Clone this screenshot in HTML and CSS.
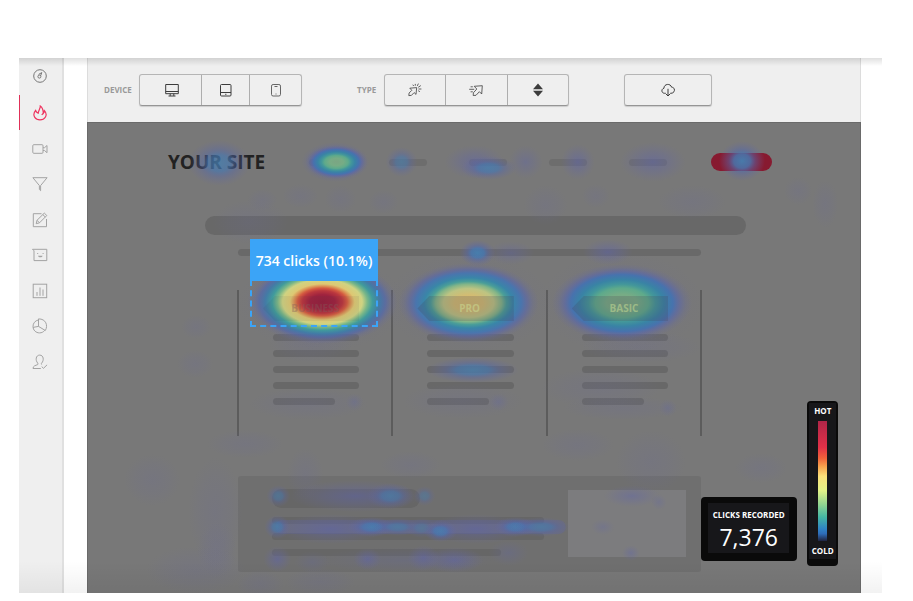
FILE: index.html
```html
<!DOCTYPE html>
<html lang="en">
<head>
<meta charset="utf-8">
<title>Click heatmap</title>
<link rel="stylesheet" href="styles.css">
</head>
<body>
<div class="app">
  <nav class="sidebar" aria-label="Main">
    <ul class="side-list">
      <li><a class="side-link dark" href="#" aria-label="Dashboard"><svg viewBox="0 0 16 16"><circle cx="8" cy="8" r="6.3"/><circle cx="7.4" cy="8.6" r="1.5"/><path d="M8.6 7.800 9.800 4.600 6.600 6.400"/></svg></a></li>
      <li class="active"><a class="side-link" href="#" aria-label="Heatmaps"><svg class="bold" viewBox="0 0 16 16"><path d="M3.600 5.500C1.500 8 1.400 10.300 2.800 12.400c1.200 1.800 3.200 2.500 5.200 2.500s4.200-.8 5.300-2.600c1.300-2.200.9-4.800-.9-6.700-.1 1.200-.4 2-1.100 2.700C11.200 5.200 10.400 2.600 8.300 1.100 8.400 3.600 6.600 5 6.200 8.200 5 7.600 4 6.900 3.600 5.500Z"/><path d="M11.300 8.300 9.700 9.900"/></svg></a></li>
      <li><a class="side-link" href="#" aria-label="Recordings"><svg viewBox="0 0 16 16"><rect x=".8" y="3.700" width="10.200" height="8.600" rx="1"/><path d="M11 6.700h1.500L15 4.500v7.200l-2.500-2.200H11"/></svg></a></li>
      <li><a class="side-link" href="#" aria-label="Funnels"><svg viewBox="0 0 16 16"><path d="M.9 1.700h14.200L8.600 9.600v5.100L7.400 13.500V9.600Z"/></svg></a></li>
      <li><a class="side-link" href="#" aria-label="Forms"><svg viewBox="0 0 16 16"><path d="M9.500 1.700H1.300v13h13.200V7"/><path d="m4.200 11.700.8-3.400 7.300-7.200 2.500 2.400-7.300 7.300ZM5 8.300l2.500 2.500M10.800 2.600l2.500 2.400"/></svg></a></li>
      <li><a class="side-link" href="#" aria-label="Feedback"><svg viewBox="0 0 16 16"><path d="M.5 2.300h14.300v11.300H2V3.800Z"/><path d="M5.200 6.500h1M10.600 6.500h1"/><path class="fill" d="M6 8.800h4.600c-.5 2-4 2-4.600 0Z"/></svg></a></li>
      <li><a class="side-link" href="#" aria-label="Surveys"><svg viewBox="0 0 16 16"><rect x="1.200" y="1.200" width="13.500" height="13.500"/><path d="M5 12.800V9M8 12.800V4.500M11 12.800V6.500"/></svg></a></li>
      <li><a class="side-link" href="#" aria-label="Reports"><svg viewBox="0 0 16 16"><path d="M6.500 1.900C3 2.700 1 5.300 1 8.400c0 3.700 2.900 6.500 6.500 6.500 2.200 0 4-.9 5.200-2.600"/><path d="M6.500.9v7.500l6.800 4.100c3-4.900.6-11.800-6.800-11.600ZM1 9.400l5.500-1"/></svg></a></li>
      <li><a class="side-link" href="#" aria-label="Recruiters"><svg viewBox="0 0 16 16"><path d="M8.800 14.500H1c0-2.700 2.500-3 4.700-3.900.5-.2.400-1 0-1.500C3.200 6.300 3.700 1.100 7.700 1.100s4.500 5.200 2 8c-.5.500-.4 1.200.2 1.500M9.700 12.600l1.800 1.700 3.600-3.500"/></svg></a></li>
    </ul>
  </nav>

  <main class="main">
    <div class="toolbar">
      <div class="tool" role="group" aria-labelledby="device-label">
        <span class="tool-label" id="device-label">DEVICE</span>
        <div class="segments device">
          <button type="button" aria-label="Desktop"><svg viewBox="0 0 14 14"><path d="M.7 1.500h12.600v9.200H.7ZM.7 8.500h12.600M5.200 10.700v2.200M8.800 10.700v2.200M3.500 13h7"/></svg></button>
          <button type="button" aria-label="Tablet"><svg viewBox="0 0 14 14"><rect x="1.500" y="1.500" width="10.500" height="11.500" rx="1"/><path d="M1.500 9.500h10.500M6.200 11.300h1.200"/></svg></button>
          <button type="button" aria-label="Phone"><svg class="soft" viewBox="0 0 14 14"><rect x="2.500" y="1.500" width="9" height="11.500" rx="1.600"/><path d="M5.500 3.500h3M6.500 11h1"/></svg></button>
        </div>
      </div>
      <div class="tool" role="group" aria-labelledby="type-label">
        <span class="tool-label short" id="type-label">TYPE</span>
        <div class="segments type">
          <button type="button" aria-label="Clicks"><svg class="thin" viewBox="0 0 14 14"><path d="M1.800 5.200 8.700 4.600 8 11.400 6.100 9.600 3.400 12.400.8 12.600 1.100 10 3.800 7.300Z"/><path d="M7.300 2.700V.9M9.300 2.900 10.400.6M10.200 4.300l2.600-1.700M10.500 6h2.900M10.200 7.700l1.700 1M5.700 3 4.800 1.700"/></svg></button>
          <button type="button" aria-label="Moves"><svg class="thin" viewBox="0 0 14 14"><path d="M5.200 3.300 13.300 2.700 12.700 11 10.400 8.700 7 12.300 4.200 12.500 4.400 9.800 7.800 6Z"/><path d="M1.600 3.800h2.200M.2 6.300h5M1.600 8.800h2.200"/></svg></button>
          <button type="button" aria-label="Scroll"><svg viewBox="0 0 14 14"><path class="fill" d="m7 .6 5 5.600H2ZM7 13.400l5-5.600H2Z"/></svg></button>
        </div>
      </div>
      <div class="tool">
        <div class="segments download">
          <button type="button" aria-label="Download"><svg viewBox="0 0 14 14"><path d="M4.800 10.300H3.600C.4 10.300-.1 6 2.900 5.300 3 .6 9.500.1 10.600 4.200c4.100.2 3.700 6-.6 6.100h-.8M7 5.800v7M5 11l2 2 2-2"/></svg></button>
        </div>
      </div>
    </div>

    <section class="canvas" aria-label="Heatmap">
      <header class="site-header">
        <strong class="logo">YOUR SITE</strong>
        <div class="site-nav"><i></i><i></i><i></i><i></i><i></i></div>
        <span class="cta"></span>
      </header>
      <div class="hero-bar"></div>
      <div class="sub-bar"></div>
      <div class="plans">
        <div class="plan"><div class="tag business"><span>BUSINESS</span></div><i></i><i></i><i></i><i></i><i></i></div>
        <div class="plan"><div class="tag"><span>PRO</span></div><i></i><i></i><i></i><i></i><i></i></div>
        <div class="plan"><div class="tag"><span>BASIC</span></div><i></i><i></i><i></i><i></i><i></i></div>
      </div>
      <div class="panel">
        <div class="copy"><i class="title"></i><i></i><i></i><i class="short"></i></div>
        <div class="thumb"></div>
      </div>

      <svg class="heat" viewBox="87 122 773 471" preserveAspectRatio="none" aria-hidden="true">
        <defs>
          <radialGradient id="hot">
            <stop offset="0" stop-color="#941f3c"/><stop offset=".17" stop-color="#9e223e"/><stop offset=".27" stop-color="#bb373e"/><stop offset=".33" stop-color="#d45b40"/><stop offset=".37" stop-color="#da8a51"/><stop offset=".43" stop-color="#dec873"/><stop offset=".53" stop-color="#cfd382"/><stop offset=".6" stop-color="#79b788"/><stop offset=".67" stop-color="#409b9c"/><stop offset=".76" stop-color="#407ba8" stop-opacity=".95"/><stop offset=".84" stop-color="#5068ae" stop-opacity=".7"/><stop offset=".92" stop-color="#6068a4" stop-opacity=".25"/><stop offset="1" stop-color="#6868a0" stop-opacity="0"/>
          </radialGradient>
          <radialGradient id="warm">
            <stop offset="0" stop-color="#d4bb70"/><stop offset=".2" stop-color="#d3bc72"/><stop offset=".36" stop-color="#bdc482"/><stop offset=".47" stop-color="#82b588"/><stop offset=".54" stop-color="#4a9e98"/><stop offset=".63" stop-color="#3986a8"/><stop offset=".75" stop-color="#4775b0" stop-opacity=".95"/><stop offset=".84" stop-color="#5967ab" stop-opacity=".6"/><stop offset=".92" stop-color="#6068a4" stop-opacity=".22"/><stop offset="1" stop-color="#6868a0" stop-opacity="0"/>
          </radialGradient>
          <radialGradient id="mild">
            <stop offset="0" stop-color="#7ba583"/><stop offset=".22" stop-color="#77ac85"/><stop offset=".38" stop-color="#5eaa8b"/><stop offset=".48" stop-color="#43979a"/><stop offset=".6" stop-color="#3983a5"/><stop offset=".73" stop-color="#4572b0" stop-opacity=".95"/><stop offset=".82" stop-color="#5967ab" stop-opacity=".6"/><stop offset=".91" stop-color="#6068a4" stop-opacity=".22"/><stop offset="1" stop-color="#6868a0" stop-opacity="0"/>
          </radialGradient>
          <radialGradient id="cool">
            <stop offset="0" stop-color="#457fb0" stop-opacity=".95"/><stop offset=".36" stop-color="#4777b0" stop-opacity=".85"/><stop offset=".58" stop-color="#5568aa" stop-opacity=".5"/><stop offset="1" stop-color="#6868a0" stop-opacity="0"/>
          </radialGradient>
          <radialGradient id="cold">
            <stop offset="0" stop-color="#5d63ad" stop-opacity=".5"/><stop offset=".5" stop-color="#6266a6" stop-opacity=".28"/><stop offset="1" stop-color="#6a6aa0" stop-opacity="0"/>
          </radialGradient>
          <radialGradient id="trace">
            <stop offset="0" stop-color="#6a6a99" stop-opacity=".2"/><stop offset=".6" stop-color="#6a6a99" stop-opacity=".1"/><stop offset="1" stop-color="#6a6a99" stop-opacity="0"/>
          </radialGradient>
        </defs>
        <g fill="url(#trace)">
          <ellipse cx="250" cy="222" rx="38" ry="22"/><ellipse cx="340" cy="199" rx="16" ry="14"/><ellipse cx="300" cy="196" rx="18" ry="12"/><ellipse cx="262" cy="200" rx="15" ry="11"/><ellipse cx="383" cy="202" rx="15" ry="12"/><ellipse cx="545" cy="205" rx="22" ry="20"/><ellipse cx="595" cy="196" rx="14" ry="12"/><ellipse cx="691" cy="202" rx="34" ry="17"/><ellipse cx="797" cy="191" rx="14" ry="14"/><ellipse cx="824" cy="204" rx="13" ry="24"/><ellipse cx="196" cy="327" rx="15" ry="12"/><ellipse cx="195" cy="364" rx="18" ry="14"/><ellipse cx="245" cy="444" rx="38" ry="14"/><ellipse cx="215" cy="512" rx="27" ry="55"/><ellipse cx="217" cy="550" rx="20" ry="28"/><ellipse cx="152" cy="480" rx="28" ry="26"/><ellipse cx="196" cy="570" rx="50" ry="24"/><ellipse cx="260" cy="584" rx="24" ry="14"/><ellipse cx="320" cy="582" rx="35" ry="14"/><ellipse cx="650" cy="462" rx="35" ry="32"/><ellipse cx="577" cy="445" rx="36" ry="16"/><ellipse cx="760" cy="468" rx="26" ry="15"/><ellipse cx="600" cy="388" rx="60" ry="20"/><ellipse cx="622" cy="408" rx="60" ry="12"/><ellipse cx="640" cy="347" rx="60" ry="16"/><ellipse cx="310" cy="343" rx="42" ry="20"/><ellipse cx="308" cy="404" rx="60" ry="16"/><ellipse cx="462" cy="401" rx="60" ry="18"/><ellipse cx="305" cy="474" rx="18" ry="26"/><ellipse cx="410" cy="465" rx="30" ry="14"/>
        </g>
        <ellipse cx="219" cy="163" rx="31" ry="23" fill="url(#cool)" opacity=".8"/>
        <ellipse cx="335" cy="162" rx="34" ry="20" fill="url(#cool)"/>
        <ellipse cx="336" cy="162" rx="31" ry="17" fill="url(#mild)"/>
        <ellipse cx="401" cy="162" rx="16" ry="15" fill="url(#cool)" opacity=".65"/>
        <ellipse cx="474" cy="162" rx="30" ry="17" fill="url(#cold)"/>
        <ellipse cx="488" cy="168" rx="28" ry="12" fill="url(#cool)" opacity=".8"/>
        <g fill="url(#cold)"><ellipse cx="525" cy="162" rx="17" ry="17" opacity=".7"/><ellipse cx="577" cy="162" rx="17" ry="18"/><ellipse cx="652" cy="162" rx="33" ry="20"/></g>
        <ellipse cx="741" cy="161" rx="23" ry="20" fill="url(#cool)"/>
        <ellipse cx="477" cy="253" rx="18" ry="13" fill="url(#cool)"/>
        <g fill="url(#cold)"><ellipse cx="510" cy="253" rx="24" ry="12" opacity=".7"/><ellipse cx="607" cy="252" rx="25" ry="13"/></g>
        <g fill="url(#trace)"><ellipse cx="322" cy="304" rx="86" ry="47"/><ellipse cx="468" cy="303" rx="84" ry="50"/><ellipse cx="621" cy="303" rx="82" ry="51"/></g>
        <ellipse cx="322" cy="302" rx="75" ry="42" fill="url(#hot)"/>
        <ellipse cx="468" cy="303" rx="70" ry="40" fill="url(#warm)"/>
        <ellipse cx="621" cy="303" rx="70" ry="39" fill="url(#mild)"/>
        <ellipse cx="472" cy="370" rx="46" ry="13" fill="url(#cool)" opacity=".8"/>
        <ellipse cx="355" cy="496" rx="66" ry="16" fill="url(#cold)"/>
        <ellipse cx="390" cy="496" rx="24" ry="13" fill="url(#cool)" opacity=".7"/>
        <ellipse cx="278" cy="496" rx="12" ry="11" fill="url(#cool)" opacity=".6"/>
        <ellipse cx="424" cy="496" rx="11" ry="10" fill="url(#cool)" opacity=".5"/>
        <rect x="275" y="520" width="290" height="14" rx="7" fill="#5e65a6" opacity=".28"/>
        <g fill="url(#cool)"><ellipse cx="277" cy="527" rx="13" ry="12" opacity=".8"/><ellipse cx="371" cy="527" rx="24" ry="10"/><ellipse cx="397" cy="527" rx="24" ry="9" opacity=".7"/><ellipse cx="421" cy="528" rx="16" ry="10" opacity=".5"/><ellipse cx="440" cy="531" rx="17" ry="11"/><ellipse cx="515" cy="527" rx="22" ry="10"/><ellipse cx="540" cy="527" rx="30" ry="10" opacity=".7"/></g>
        <g fill="url(#cold)"><ellipse cx="330" cy="529" rx="55" ry="15"/><ellipse cx="475" cy="529" rx="50" ry="15"/><ellipse cx="277" cy="559" rx="14" ry="13"/><ellipse cx="367" cy="559" rx="14" ry="11"/><ellipse cx="423" cy="558" rx="16" ry="13"/><ellipse cx="454" cy="560" rx="29" ry="13"/><ellipse cx="405" cy="560" rx="90" ry="13" opacity=".4"/><ellipse cx="508" cy="553" rx="20" ry="13" opacity=".5"/><ellipse cx="312" cy="562" rx="18" ry="11" opacity=".4"/><ellipse cx="631" cy="496" rx="28" ry="11" opacity=".8"/><ellipse cx="658" cy="502" rx="8" ry="8" opacity=".5"/><ellipse cx="602" cy="527" rx="12" ry="8" opacity=".5"/><ellipse cx="630" cy="553" rx="9" ry="8" opacity=".7"/><ellipse cx="354" cy="402" rx="9" ry="9" opacity=".5"/><ellipse cx="498" cy="402" rx="10" ry="9" opacity=".5"/><ellipse cx="667" cy="408" rx="9" ry="9" opacity=".5"/></g>
      </svg>

      <div class="hotspot"><div class="tip">734 clicks (10.1%)</div></div>
      <div class="counter"><div class="counter-in"><span class="counter-label">CLICKS RECORDED</span><span class="counter-value">7,376</span></div></div>
      <div class="legend"><div class="legend-in"><span>HOT</span><div class="scale"></div><span>COLD</span></div></div>
    </section>
  </main>
</div>
</body>
</html>
```
FILE: styles.css
```css
* { box-sizing: border-box; }

body {
  margin: 0;
  min-height: 100vh;
  display: flex;
  padding: 58px 32px 8px 19px;
  background: #fff;
  font-family: "Open Sans", "Noto Sans", sans-serif;
}

.app {
  position: relative;
  flex: 1;
  display: flex;
  gap: 23px;
  padding-right: 21px;
}
/* soft shade along the top and bottom edges */
.app::before,
.app::after {
  content: "";
  position: absolute;
  left: 0;
  right: 0;
  z-index: 5;
  pointer-events: none;
}
.app::before {
  top: 0;
  height: 8px;
  background: linear-gradient(rgba(0, 0, 0, .12), rgba(0, 0, 0, 0));
}
.app::after {
  bottom: 0;
  height: 32px;
  background: linear-gradient(rgba(0, 0, 0, 0), rgba(0, 0, 0, .05));
}

.sidebar {
  flex: 0 0 45px;
  background: #efefef;
  border-right: 2px solid #e0e0e0;
}
.side-list { list-style: none; margin: 0; padding: 0; }
.side-list li:nth-child(odd) { margin-top: 1px; }
.side-list li:first-child { margin-top: 0; }
.side-list .active { margin-top: 2px; }
.side-link {
  display: flex;
  align-items: center;
  justify-content: center;
  height: 35px;
  padding-right: 2px;
  color: #a3a3a3;
}
.side-link.dark { color: #777; }
.active .side-link { color: #ee3560; box-shadow: inset 1px 0 #e03058; }
.side-link svg { width: 16px; height: 16px; }

svg { display: block; fill: none; stroke: currentColor; stroke-width: 1; }
svg.bold { stroke-width: 1.2; }
svg .fill { fill: currentColor; stroke: none; }

.main { flex: 1; min-width: 0; display: flex; flex-direction: column; }

.toolbar {
  display: flex;
  align-items: center;
  gap: 55px;
  height: 64px;
  padding: 0 16px;
  background: #efefef;
  border: solid #dcdcdc;
  border-width: 0 1px;
}
.tool { display: flex; align-items: center; gap: 7px; }
.tool-label { min-width: 28px; color: #999; font-size: 8px; font-weight: 700; line-height: 12px; }
.tool-label.short { min-width: 20px; }
.segments {
  display: flex;
  height: 32px;
  border: 1px solid #b5b5b5;
  border-bottom-color: #959595;
  border-radius: 3px;
  box-shadow: 0 1px 1px rgba(0, 0, 0, .15);
}
.segments button {
  display: flex;
  flex: 1;
  align-items: center;
  justify-content: center;
  padding: 0;
  border: 0;
  background: none;
  color: #3c3c3c;
}
.segments button + button { border-left: 1px solid #adadad; }
.segments svg { width: 14px; height: 14px; }
.segments .soft { color: #666; }
.segments .thin { stroke-width: .8; }
.device { width: 163px; }
.device button { flex: 0 0 48px; }
.device button:first-child { flex-basis: 61px; padding-left: 3px; }
.device button:last-child { flex: 1; }
.type { width: 185px; }
.download { width: 88px; }

.canvas {
  position: relative;
  flex: 1;
  padding-bottom: 21px;
  background: #787878;
  border: solid #6a6a6a;
  border-width: 1px 1px 0;
}
.canvas i { display: block; height: 7px; border-radius: 4px; background: #686868; }

.site-header {
  display: flex;
  align-items: center;
  gap: 44px;
  height: 28px;
  margin: 25px 88px 0 80px;
}
.logo { color: #222; font-size: 19px; font-weight: 700; line-height: 28px; white-space: nowrap; }
.site-nav { display: flex; gap: 42px; margin-left: auto; }
.site-nav i { width: 38px; background: #6d6d6d; }
.cta { width: 61px; height: 18px; border-radius: 9px; background: #871a30; }

.hero-bar { height: 19px; margin: 40px 114px 0 117px; border-radius: 10px; background: #686868; }
.sub-bar { height: 7px; margin: 14px 159px 0 150px; border-radius: 4px; background: #696969; }

.plans {
  display: grid;
  grid-template-columns: repeat(3, 1fr);
  height: 146px;
  margin: 34px 158px 0 149px;
  border-right: 2px solid #5c5c5c;
}
.plan {
  display: flex;
  flex-direction: column;
  gap: 9px;
  padding: 6px 32px 0 34px;
  border-left: 2px solid #5c5c5c;
}
.plan i:last-child { width: 62px; }
.tag {
  position: relative;
  z-index: 2;
  height: 25px;
  margin: 0 0 4px -10px;
  padding-left: 8px;
  background: rgba(70, 60, 80, .2);
  clip-path: polygon(12px 0, 100% 0, 100% 100%, 12px 100%, 0 50%);
  color: rgba(205, 225, 150, .5);
  font-size: 10px;
  font-weight: 700;
  line-height: 25px;
  text-align: center;
}
.tag.business { background: rgba(70, 60, 80, .08); color: rgba(130, 90, 90, .4); }

.panel {
  display: flex;
  justify-content: space-between;
  height: 96px;
  margin: 40px 159px 0 150px;
  padding: 14px 15px 15px 34px;
  border-radius: 3px;
  background: #6f6f6f;
}
.copy { display: flex; flex-direction: column; gap: 9px; width: 272px; }
.copy .title { width: 148px; height: 19px; margin-top: -1px; border-radius: 10px; }
.copy i { background: #666; }
.copy .short { width: 229px; }
.thumb { width: 118px; background: #7c7c7e; }

.heat { position: absolute; inset: -1px; width: calc(100% + 2px); height: calc(100% + 1px); stroke: none; }

.hotspot {
  position: absolute;
  z-index: 3;
  top: 116px;
  left: 162px;
  width: 128px;
  height: 88px;
  border: 2px dashed #3ba4f7;
}
.tip {
  height: 42px;
  margin: -2px -2px 0;
  border-radius: 3px 3px 0 0;
  background: #3ba4f7;
  color: #fff;
  font-size: 14px;
  font-weight: 600;
  line-height: 43px;
  text-align: center;
  white-space: nowrap;
}

.counter,
.legend { position: absolute; z-index: 6; border-radius: 4px; background: #0a0a0a; color: #fff; }
.counter { right: 63px; bottom: 32px; width: 96px; padding: 6px 8px 8px 7px; }
.counter-in {
  display: flex;
  flex-direction: column;
  align-items: center;
  height: 50px;
  padding-top: 6px;
  background: #17171a;
  white-space: nowrap;
}
.counter-label { font-size: 8px; font-weight: 700; line-height: 12px; }
.counter-value { font-size: 23px; line-height: 32px; }

.legend { right: 22px; bottom: 27px; width: 31px; padding: 2px 2px 7px; }
.legend-in {
  display: flex;
  flex-direction: column;
  align-items: center;
  gap: 4px;
  padding: 2px 0;
  background: #17171a;
  font-size: 8px;
  font-weight: 700;
  line-height: 12px;
}
.scale {
  width: 9px;
  height: 120px;
  background: linear-gradient(#b02548, #e23148 22%, #f0623a 31%, #f7a34e 38%, #fbe07a 46%, #e3f388 58%, #8ed492 70%, #45b7a4 80%, #2f83c5 90%, #2e6cb8 94%, #202440);
}
```
